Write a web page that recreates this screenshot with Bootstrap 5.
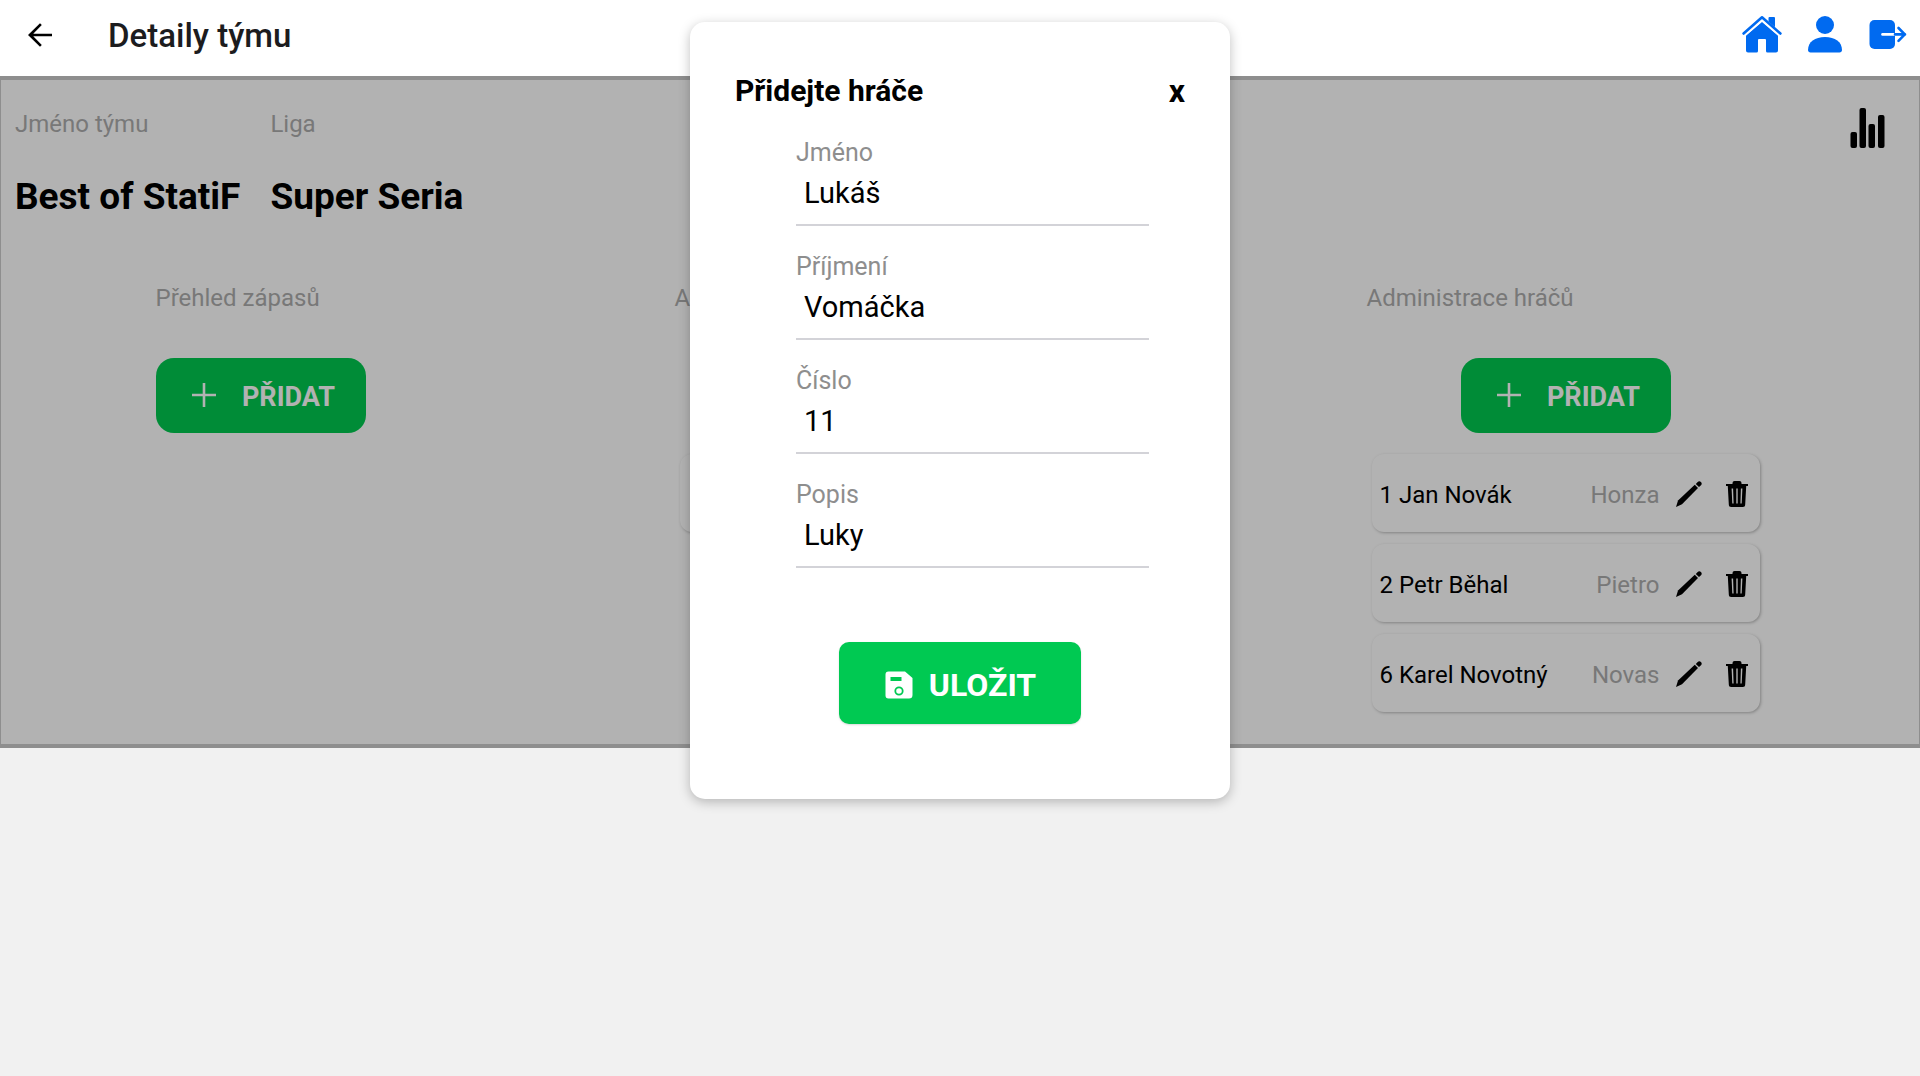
<!DOCTYPE html>
<html lang="cs">
<head>
<meta charset="utf-8">
<meta name="viewport" content="width=device-width, initial-scale=1">
<title>Detaily týmu</title>
<link rel="stylesheet" href="https://cdn.jsdelivr.net/npm/bootstrap@5.3.0/dist/css/bootstrap.min.css">
<style>
  body { background: #f1f1f1; font-family: Roboto, "Noto Sans", sans-serif; color: #000; }
  .top-bar { height: 76px; padding: 0 12px 6px 22px; }
  .icon-btn { background: none; border: 0; padding: 0; color: inherit; display: inline-flex; }
  .top-title { font-size: 33px; line-height: 40px; font-weight: 500; color: #1c1c1e; margin: 2px 0 0 50px; }
  .app-blue { color: #006af0; gap: 20px; }
  .team-panel { background: #fff; border: solid #ccc; border-width: 4px 1px; padding-bottom: 32px; }
  .dimmer { position: absolute; inset: -4px -1px; background: rgba(0, 0, 0, .3); }
  .team-info { padding: 28px 33px 0 14px; gap: 30px; }
  .soft-label { font-size: 24px; line-height: 32px; color: #adadad; }
  .team-name { font-size: 37px; line-height: 44px; font-weight: 700; margin: 35px 0 0; }
  .columns { padding-top: 63px; }
  .wide-col { min-width: 383px; }
  .player-col { min-width: 398px; }
  .add-btn { background: #00c94f; color: #fff; border: 0; border-radius: 18px; width: 210px; height: 75px; padding: 3px 0 0 6px; font-size: 27px; font-weight: 700; gap: 26px; margin: 44px 0 21px; }
  .add-btn svg { margin-bottom: 4px; }
  .player { height: 78px; margin: 0 5px 12px; padding: 4px 12px 0 8px; border-radius: 12px; font-size: 24px; box-shadow: 1px 1px 3px 0 #bbb; }
  .player svg { margin-bottom: 2px; }
  .player:last-child { margin-bottom: 0; }
  .sheet-layer { position: absolute; top: 22px; left: 0; right: 0; }
  .sheet { background: #fff; width: 540px; border-radius: 15px; padding: 49px 45px 75px; box-shadow: 0 3px 12px rgba(0, 0, 0, .25); }
  .sheet-title, .close-x { font-size: 30px; line-height: 40px; font-weight: 700; margin: 0; }
  .close-x { font-size: 32px; }
  .sheet-fields { padding: 27px 36px 0 61px; }
  .field { height: 114px; }
  .field label { display: block; font-size: 25px; line-height: 30px; color: #8e8e8e; }
  .field input { display: block; width: 100%; height: 58px; border: 0; border-bottom: 2px solid #d3d3d8; border-radius: 0; padding: 0 8px 6px; font-size: 29px; color: #000; background: none; outline: 0; }
  .save-btn { background: #00c952; color: #fff; border: 0; border-radius: 10px; width: 242px; height: 82px; padding: 3px 0 0 1px; font-size: 32px; font-weight: 700; gap: 16px; margin-top: 48px; box-shadow: 0 1px 2px rgba(0, 0, 0, .15); }
</style>
</head>
<body>
<svg class="d-none" aria-hidden="true">
  <symbol id="i-plus" viewBox="0 0 24 24"><path d="M12 0v24M0 12h24" stroke="currentColor" stroke-width="2.600"/></symbol>
  <symbol id="i-pencil" viewBox="0 0 26 26"><path d="M0 26l2-6.500L18.800 3.800l3.200 3.200L6 23.200z"/><path d="M19.800 2.900l1.900-1.800a2.300 2.300 0 0 1 3.300 3.200L23 6.100z"/></symbol>
  <symbol id="i-trash" viewBox="0 0 22 26"><path fill-rule="evenodd" d="M0 3h6.500V2a2 2 0 0 1 2-2h5a2 2 0 0 1 2 2v1H22v2h-1.800l-1 18.500a2.500 2.500 0 0 1-2.500 2.500H5.300a2.500 2.500 0 0 1-2.500-2.500L1.800 5H0zM5.600 7.500l.7 15h1.300l-.5-15zM10.300 7.500v15h1.400v-15zM14.900 7.500l-.5 15h1.300l.7-15z"/></symbol>
</svg>

<header class="top-bar bg-white d-flex align-items-center">
  <button class="icon-btn" type="button" aria-label="Zpět"><svg width="36" height="36" viewBox="0 0 24 24" fill="currentColor"><path d="M20 11.100H7.500l5.700-5.700L12 4.200 4 12l8 7.800 1.200-1.200-5.700-5.700H20z"/></svg></button>
  <h1 class="top-title">Detaily týmu</h1>
  <nav class="app-blue d-flex align-items-center ms-auto">
    <a class="icon-btn" href="#" aria-label="Domů"><svg width="42" height="42" viewBox="0 0 42 42" fill="currentColor"><path d="M26.500 8V4a1 1 0 0 1 1-1H32a1 1 0 0 1 1 1v10.500z"/><path d="M20 7.500L4 21.500v15a2 2 0 0 0 2 2h8.500a1.500 1.500 0 0 0 1.500-1.500V26a1 1 0 0 1 1-1h6a1 1 0 0 1 1 1v11a1.500 1.500 0 0 0 1.500 1.500H34a2 2 0 0 0 2-2v-15z"/><path d="M1.500 20.800L20 5l18.500 15.800" fill="none" stroke="#fff" stroke-width="4.500"/><path d="M1.600 19.500L20 3.300l18.400 16.200" fill="none" stroke="currentColor" stroke-width="2.600" stroke-linecap="round" stroke-linejoin="round"/></svg></a>
    <a class="icon-btn" href="#" aria-label="Profil"><svg width="42" height="42" viewBox="0 0 42 42" fill="currentColor"><circle cx="21" cy="11" r="9"/><path d="M4 36c0-8 7-13 17-13s17 5 17 13c0 1.500-1 2.500-2.500 2.500h-29C5 38.500 4 37.500 4 36z"/></svg></a>
    <a class="icon-btn" href="#" aria-label="Odhlásit"><svg width="42" height="42" viewBox="0 0 42 42"><rect x="3.500" y="6" width="25.500" height="29" rx="5" fill="currentColor"/><path d="M16.500 20.400H29" stroke="#fff" stroke-width="2.600" stroke-linecap="round"/><path d="M29 20.400h10M32.500 14l6.300 6.400-6.300 6.400" fill="none" stroke="currentColor" stroke-width="2.600" stroke-linecap="round" stroke-linejoin="round"/></svg></a>
  </nav>
</header>

<main class="team-panel position-relative">
  <section class="team-info d-flex">
    <div><div class="soft-label">Jméno týmu</div><h2 class="team-name">Best of StatiF</h2></div>
    <div><div class="soft-label">Liga</div><h2 class="team-name">Super Seria</h2></div>
    <button class="icon-btn ms-auto align-self-start" type="button" aria-label="Statistiky"><svg width="36" height="40" viewBox="0 0 36 40"><rect x="0.500" y="24" width="6.500" height="16" rx="2"/><rect x="9.500" y="0" width="6.500" height="40" rx="2"/><rect x="18.500" y="16" width="6.500" height="24" rx="2"/><rect x="28" y="7" width="6.500" height="33" rx="2"/></svg></button>
  </section>

  <section class="columns d-flex justify-content-around align-items-start">
    <div>
      <div class="soft-label">Přehled zápasů</div>
      <button class="add-btn d-flex align-items-center justify-content-center" type="button"><svg width="24" height="24"><use href="#i-plus"/></svg>PŘIDAT</button>
    </div>
    <div class="wide-col d-flex flex-column">
      <div class="soft-label">Administrace lig</div>
      <button class="add-btn d-flex align-items-center justify-content-center align-self-center" type="button"><svg width="24" height="24"><use href="#i-plus"/></svg>PŘIDAT</button>
      <div class="player"></div>
    </div>
    <div class="player-col d-flex flex-column">
      <div class="soft-label">Administrace hráčů</div>
      <button class="add-btn d-flex align-items-center justify-content-center align-self-center" type="button"><svg width="24" height="24"><use href="#i-plus"/></svg>PŘIDAT</button>
      <div class="player d-flex align-items-center">
        <span>1 Jan Novák</span><span class="soft-label ms-auto me-3">Honza</span>
        <button class="icon-btn me-4 pe-0" type="button" aria-label="Upravit"><svg width="26" height="26"><use href="#i-pencil"/></svg></button>
        <button class="icon-btn" type="button" aria-label="Smazat"><svg width="22" height="26"><use href="#i-trash"/></svg></button>
      </div>
      <div class="player d-flex align-items-center">
        <span>2 Petr Běhal</span><span class="soft-label ms-auto me-3">Pietro</span>
        <button class="icon-btn me-4" type="button" aria-label="Upravit"><svg width="26" height="26"><use href="#i-pencil"/></svg></button>
        <button class="icon-btn" type="button" aria-label="Smazat"><svg width="22" height="26"><use href="#i-trash"/></svg></button>
      </div>
      <div class="player d-flex align-items-center">
        <span>6 Karel Novotný</span><span class="soft-label ms-auto me-3">Novas</span>
        <button class="icon-btn me-4" type="button" aria-label="Upravit"><svg width="26" height="26"><use href="#i-pencil"/></svg></button>
        <button class="icon-btn" type="button" aria-label="Smazat"><svg width="22" height="26"><use href="#i-trash"/></svg></button>
      </div>
    </div>
  </section>
  <div class="dimmer"></div>
</main>

<div class="sheet-layer d-flex justify-content-center">
  <form class="sheet" role="dialog" aria-labelledby="sheet-title">
    <div class="d-flex justify-content-between">
      <h2 class="sheet-title" id="sheet-title">Přidejte hráče</h2>
      <button class="icon-btn close-x" type="button">x</button>
    </div>
    <div class="sheet-fields">
      <div class="field"><label for="first">Jméno</label><input id="first" type="text" value="Lukáš"></div>
      <div class="field"><label for="last">Příjmení</label><input id="last" type="text" value="Vomáčka"></div>
      <div class="field"><label for="number">Číslo</label><input id="number" type="text" value="11"></div>
      <div class="field"><label for="about">Popis</label><input id="about" type="text" value="Luky"></div>
    </div>
    <button class="save-btn d-flex align-items-center justify-content-center mx-auto" type="button"><svg width="28" height="28" viewBox="0 0 28 28"><path fill="#fff" d="M3.500.5H20L27.500 7v17a3.500 3.500 0 0 1-3.500 3.500H3.500A3 3 0 0 1 .5 24.500v-21a3 3 0 0 1 3-3z"/><path fill="#00c952" d="M5.500 6h11v4h-11z"/><circle cx="14" cy="20" r="3.700" fill="none" stroke="#00c952" stroke-width="1.800"/></svg>ULOŽIT</button>
  </form>
</div>
<script src="https://cdn.jsdelivr.net/npm/bootstrap@5.3.0/dist/js/bootstrap.bundle.min.js"></script>
</body>
</html>
